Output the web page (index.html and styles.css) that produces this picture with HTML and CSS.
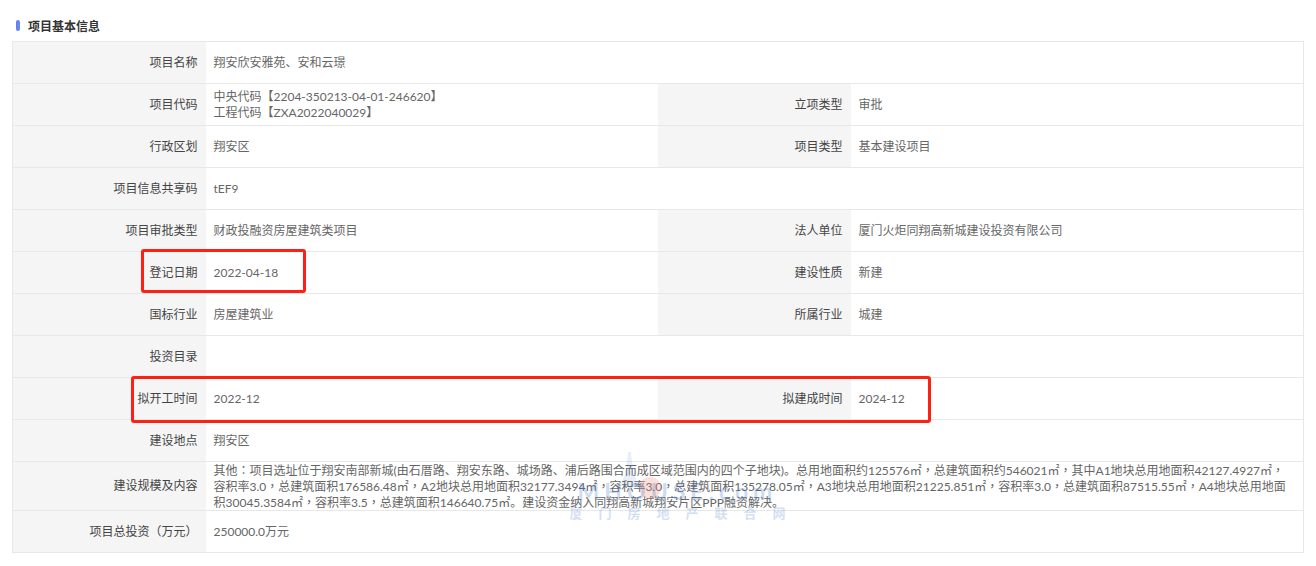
FILE: index.html
```html
<!DOCTYPE html>
<html lang="zh-CN">
<head>
<meta charset="utf-8">
<title>项目基本信息</title>
<link rel="stylesheet" href="styles.css">
</head>
<body>
<main class="page">
  <h2 class="title">项目基本信息</h2>
  <table class="info">
    <colgroup><col class="c-label"><col class="c-value"><col class="c-label"><col class="c-value2"></colgroup>
    <tr><th>项目名称</th><td colspan="3">翔安欣安雅苑、安和云璟</td></tr>
    <tr><th>项目代码</th><td>中央代码【2204-350213-04-01-246620】<br>工程代码【ZXA2022040029】</td><th>立项类型</th><td>审批</td></tr>
    <tr><th>行政区划</th><td>翔安区</td><th>项目类型</th><td>基本建设项目</td></tr>
    <tr><th>项目信息共享码</th><td colspan="3">tEF9</td></tr>
    <tr><th>项目审批类型</th><td>财政投融资房屋建筑类项目</td><th>法人单位</th><td>厦门火炬同翔高新城建设投资有限公司</td></tr>
    <tr><th>登记日期</th><td>2022-04-18</td><th>建设性质</th><td>新建</td></tr>
    <tr><th>国标行业</th><td>房屋建筑业</td><th>所属行业</th><td>城建</td></tr>
    <tr><th>投资目录</th><td colspan="3"></td></tr>
    <tr><th>拟开工时间</th><td>2022-12</td><th>拟建成时间</th><td>2024-12</td></tr>
    <tr><th>建设地点</th><td colspan="3">翔安区</td></tr>
    <tr class="tall"><th>建设规模及内容</th><td colspan="3"><div class="long">其他<span class="p" lang="zh-TW">：</span>项目选址位于翔安南部新城(由石厝路、翔安东路、城场路、浦后路围合而成区域范围内的四个子地块)。总用地面积约125576㎡<span class="p" lang="zh-TW">，</span>总建筑面积约546021㎡<span class="p" lang="zh-TW">，</span>其中A1地块总用地面积42127.4927㎡<span class="p" lang="zh-TW">，</span><br>容积率3.0<span class="p" lang="zh-TW">，</span>总建筑面积176586.48㎡<span class="p" lang="zh-TW">，</span>A2地块总用地面积32177.3494㎡<span class="p" lang="zh-TW">，</span>容积率3.0<span class="p" lang="zh-TW">，</span>总建筑面积135278.05㎡<span class="p" lang="zh-TW">，</span>A3地块总用地面积21225.851㎡<span class="p" lang="zh-TW">，</span>容积率3.0<span class="p" lang="zh-TW">，</span>总建筑面积87515.55㎡<span class="p" lang="zh-TW">，</span>A4地块总用地面<br>积30045.3584㎡<span class="p" lang="zh-TW">，</span>容积率3.5<span class="p" lang="zh-TW">，</span>总建筑面积146640.75㎡。建设资金纳入同翔高新城翔安片区PPP融资解决。</div></td></tr>
    <tr><th>项目总投资<span class="p" lang="zh-TW">（</span>万元<span class="p" lang="zh-TW">）</span></th><td colspan="3">250000.0万元</td></tr>
  </table>
  <div class="mark mark-date"></div>
  <div class="mark mark-time"></div>
  <div class="watermark">
    <svg class="wm-art" width="225" height="50" viewBox="0 0 225 50" aria-hidden="true">
      <path class="wm-tower" d="M63 0 L66 0 L68 20 L74 34 L55 34 L61 20 Z"/>
      <circle class="wm-sun" cx="85" cy="36" r="11"/>
    </svg>
    <span class="wm-logo">MHOUSE.com</span>
    <span class="wm-name">厦门房地产联合网</span>
  </div>
</main>
</body>
</html>
```
FILE: styles.css
```css
* { box-sizing: border-box; }
html, body { margin: 0; padding: 0; background: #fff; }
body { font: 12px/16px Lato, "Noto Sans CJK SC", sans-serif; color: #666; }
.page { position: relative; width: 1316px; height: 566px; padding: 19px 13px 0 12px; overflow: hidden; }
.title { position: relative; margin: 0 0 6px; padding-left: 16px; height: 16px; font-size: 12px; line-height: 16px; font-weight: 700; color: #333; }
.title::before { content: ""; position: absolute; left: 4px; top: 1px; width: 4px; height: 11px; border-radius: 2px; background: linear-gradient(to right, #7a6ff0, #4f9bf5); }
.info { width: 1291px; table-layout: fixed; border-collapse: collapse; border: 1px solid #e8e8e8; }
.c-label { width: 193px; }
.c-value { width: 452px; }
.c-value2 { width: 453px; }
.info tr { height: 42px; }
.info tr.tall { height: 49px; }
.info th, .info td { border-top: 1px solid #e8e8e8; border-bottom: 1px solid #e8e8e8; padding: 0 8px; font-weight: 400; vertical-align: middle; }
.info th { background: #f5f5f5; text-align: right; color: #444; }
.info td { text-align: left; color: #666; }
.long { height: 48px; padding-top: 1px; white-space: nowrap; }
.p { font-family: Lato, "Noto Sans CJK TC", sans-serif; }
.mark { position: absolute; border: 3px solid #ff1f14; border-radius: 3px; }
.mark-date { left: 141px; top: 249px; width: 165px; height: 44px; }
.mark-time { left: 131px; top: 376px; width: 800px; height: 47px; }
.watermark { position: absolute; left: 565px; top: 452px; width: 225px; height: 72px; display: flex; flex-direction: column; align-items: center; color: #3f78c8; pointer-events: none; }
.wm-art { position: absolute; left: 0; top: 0; }
.wm-tower { fill: #3f78c8; opacity: .12; }
.wm-sun { fill: #f08070; opacity: .25; }
.wm-logo { margin-top: 25px; font-size: 23px; line-height: 28px; letter-spacing: 5px; font-weight: 700; opacity: .25; }
.wm-name { font-size: 13px; line-height: 16px; letter-spacing: 16px; margin-right: -16px; font-weight: 700; opacity: .22; }
```
